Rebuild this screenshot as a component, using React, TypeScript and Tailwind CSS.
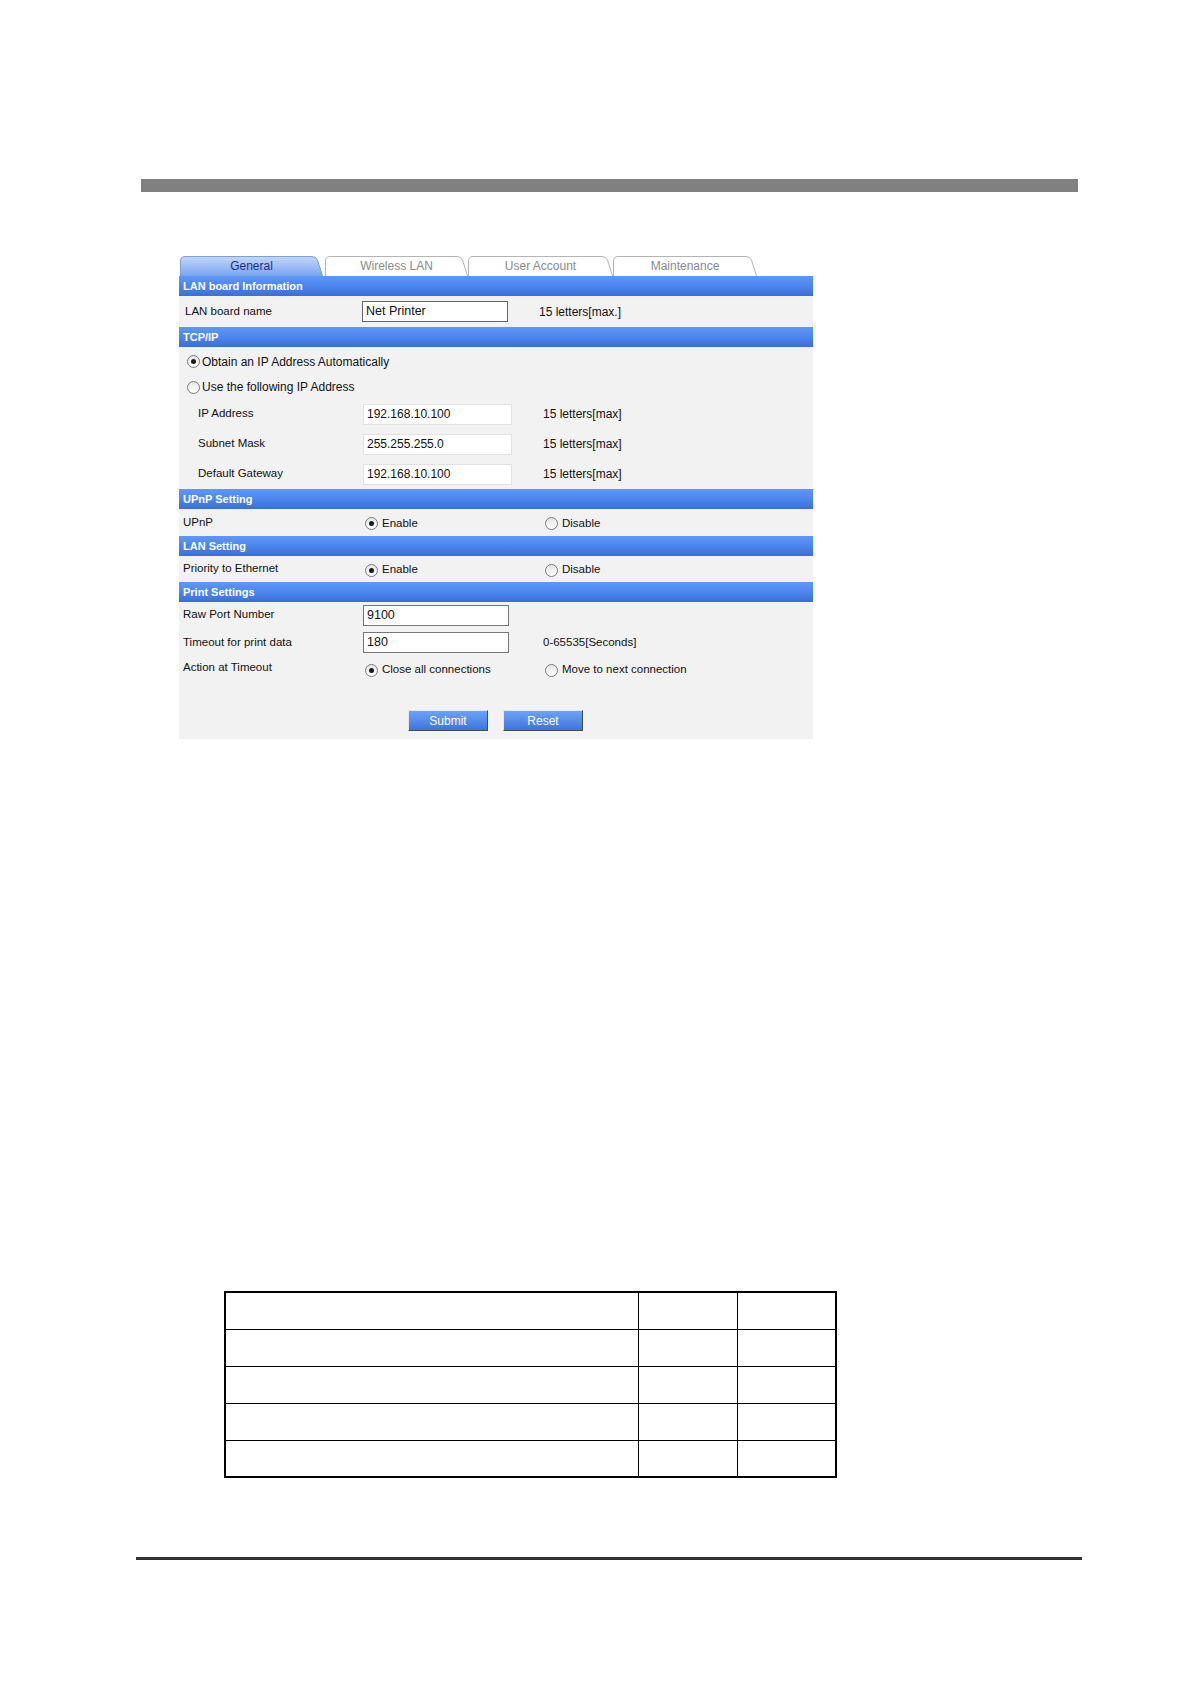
import React from "react";

const font = { fontFamily: '"Liberation Sans", Arial, sans-serif' };

function Radio({ checked }: { checked?: boolean }) {
  return (
    <span className="inline-flex h-[13px] w-[13px] shrink-0 items-center justify-center rounded-full border border-[#7a7a7a] bg-gradient-to-b from-[#e6e6e6] to-white">
      {checked && <span className="h-[5px] w-[5px] rounded-full bg-[#1a1a1a]" />}
    </span>
  );
}

function Header({ title }: { title: string }) {
  return (
    <div className="flex h-[20px] items-center bg-gradient-to-b from-[#5f97f8] via-[#4c86ee] to-[#3a6ed6] pl-[4px] text-[11px] font-bold text-white">
      {title}
    </div>
  );
}

function Tab({ label, width, active }: { label: string; width: number; active?: boolean }) {
  const w = width;
  const d = `M0.5,20 L0.5,5 Q0.5,0.5 5,0.5 L${w - 11},0.5 Q${w - 7},0.5 ${w - 5.5},4 L${w - 0.5},20`;
  const gid = "g" + label.replace(/\s/g, "");
  return (
    <div className="relative flex h-[20px] items-center justify-center" style={{ width: w }}>
      <svg className="absolute inset-0" width={w} height={20} viewBox={`0 0 ${w} 20`}>
        <defs>
          <linearGradient id={gid} x1="0" y1="0" x2="0" y2="1">
            <stop offset="0" stopColor={active ? "#c2d7fa" : "#ffffff"} />
            <stop offset="1" stopColor={active ? "#78a4f1" : "#ffffff"} />
          </linearGradient>
        </defs>
        <path d={d + " Z"} fill={`url(#${gid})`} stroke="none" />
        <path d={d} fill="none" stroke={active ? "#7f9fd8" : "#b4b4b4"} strokeWidth={1} />
      </svg>
      <span className={"relative text-[12px] " + (active ? "text-[#1c2f7c]" : "text-[#8a8a8a]")}>{label}</span>
    </div>
  );
}

function Btn({ label }: { label: string }) {
  return (
    <div className="flex h-[21px] w-[80px] items-center justify-center border border-[#dbe7fb] border-b-[#4a4a4a] border-r-[#4a4a4a] bg-gradient-to-b from-[#6ea2f8] to-[#3d74dd] text-[12px] text-white">
      {label}
    </div>
  );
}

export default function App() {
  return (
    <div className="relative h-[1684px] w-[1191px] overflow-hidden bg-white text-[#111]" style={font}>
      <div className="pt-[179px]">
        <div className="ml-[141px] h-[13px] w-[937px] bg-[#808080]" />

        {/* Panel */}
        <div className="ml-[179px] mt-[62px] w-[634px]">
          <div className="flex h-[22px] items-end">
            <div className="ml-[1px]"><Tab label="General" width={143} active /></div>
            <div className="ml-[2px]"><Tab label="Wireless LAN" width={143} /></div>
            <div><Tab label="User Account" width={145} /></div>
            <div><Tab label="Maintenance" width={144} /></div>
          </div>

          <div className="bg-[#f2f2f2] text-[11.5px]">
            <Header title="LAN board Information" />
            <div className="flex h-[31px] items-center">
              <div className="w-[183px] pl-[6px]">LAN board name</div>
              <div className="flex h-[21px] w-[146px] items-center border border-[#666] bg-white pl-[3px] text-[12.5px]">Net Printer</div>
              <div className="ml-[31px] text-[12px]">15 letters[max.]</div>
            </div>

            <Header title="TCP/IP" />
            <div className="flex h-[27px] items-center pl-[8px] pt-[2px] text-[12px]">
              <Radio checked />
              <span className="ml-[2px]">Obtain an IP Address Automatically</span>
            </div>
            <div className="flex h-[25px] items-center pl-[8px] pt-[1px] text-[12px]">
              <Radio />
              <span className="ml-[2px]">Use the following IP Address</span>
            </div>
            {[
              ["IP Address", "192.168.10.100"],
              ["Subnet Mask", "255.255.255.0"],
              ["Default Gateway", "192.168.10.100"],
            ].map(([l, v]) => (
              <div key={l} className="flex h-[30px] items-center">
                <div className="w-[184px] pl-[19px]">{l}</div>
                <div className="flex h-[21px] w-[149px] items-center border border-[#e2e2e2] bg-white pl-[3px] text-[12px]">{v}</div>
                <div className="ml-[31px] text-[12px]">15 letters[max]</div>
              </div>
            ))}

            <Header title="UPnP Setting" />
            <div className="flex h-[27px] items-center">
              <div className="w-[186px] pl-[4px]">UPnP</div>
              <div className="flex w-[180px] items-center pt-[2px]">
                <Radio checked />
                <span className="ml-[4px]">Enable</span>
              </div>
              <div className="flex items-center pt-[2px]">
                <Radio />
                <span className="ml-[4px]">Disable</span>
              </div>
            </div>

            <Header title="LAN Setting" />
            <div className="flex h-[26px] items-center">
              <div className="w-[186px] pl-[4px]">Priority to Ethernet</div>
              <div className="flex w-[180px] items-center pt-[2px]">
                <Radio checked />
                <span className="ml-[4px]">Enable</span>
              </div>
              <div className="flex items-center pt-[2px]">
                <Radio />
                <span className="ml-[4px]">Disable</span>
              </div>
            </div>

            <Header title="Print Settings" />
            <div className="flex h-[26px] items-center">
              <div className="w-[184px] pl-[4px]">Raw Port Number</div>
              <div className="flex h-[21px] w-[146px] items-center border border-[#777] bg-white pl-[3px] text-[12.5px]">9100</div>
            </div>
            <div className="flex h-[29px] items-center">
              <div className="w-[184px] pl-[4px]">Timeout for print data</div>
              <div className="flex h-[21px] w-[146px] items-center border border-[#777] bg-white pl-[3px] text-[12.5px]">180</div>
              <div className="ml-[34px]">0-65535[Seconds]</div>
            </div>
            <div className="flex h-[24px] items-center">
              <div className="w-[186px] pl-[4px] pb-[2px]">Action at Timeout</div>
              <div className="flex w-[180px] items-center pt-[2px]">
                <Radio checked />
                <span className="ml-[4px]">Close all connections</span>
              </div>
              <div className="flex items-center pt-[2px]">
                <Radio />
                <span className="ml-[4px]">Move to next connection</span>
              </div>
            </div>

            <div className="flex pb-[8px] pl-[229px] pt-[29px]">
              <Btn label="Submit" />
              <div className="ml-[15px]"><Btn label="Reset" /></div>
            </div>
          </div>
        </div>

        {/* Table */}
        <table className="ml-[224px] mt-[552px] w-[613px] border-collapse border-[2px] border-black">
          <tbody>
            {[0, 1, 2, 3, 4].map((i) => (
              <tr key={i} className="h-[37px]">
                <td className="w-[413px] border-[1.5px] border-black" />
                <td className="w-[99px] border-[1.5px] border-black" />
                <td className="border-[1.5px] border-black" />
              </tr>
            ))}
          </tbody>
        </table>

        <div className="ml-[136px] mt-[79px] h-[3px] w-[946px] bg-[#333]" />
      </div>
    </div>
  );
}
